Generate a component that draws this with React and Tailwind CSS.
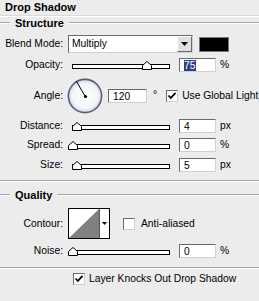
const sunken =
  'border border-t-[#6a6a6a] border-l-[#6a6a6a] border-r-[#d0d0d0] border-b-[#d0d0d0] bg-white';

function Label({ children }) {
  return <div className="w-[63px] shrink-0 text-right">{children}</div>;
}

function GroupHeader({ title }) {
  return (
    <div className="flex h-[12px] items-center">
      <div className="h-[2px] w-[10px] border-t border-b border-t-[#a3a3a3] border-b-white" />
      <div className="px-[5px] text-[11px] font-bold leading-[12px]">{title}</div>
      <div className="h-[2px] flex-1 border-t border-b border-t-[#a3a3a3] border-b-white" />
    </div>
  );
}

function Etched() {
  return <div className="h-[2px] border-t border-b border-t-[#a3a3a3] border-b-white" />;
}

function Slider({ pos }) {
  return (
    <div className="relative ml-[5px] h-[14px] w-[102px] shrink-0">
      <div className="absolute left-[4px] right-0 top-[6px] h-[5px] border border-black bg-white" />
      <svg
        className="absolute top-[3px]"
        style={{ left: pos }}
        width="10"
        height="9"
        viewBox="0 0 10 9"
      >
        <path d="M0.5 8.5 V4.5 L5 0.5 L9.5 4.5 V8.5 Z" fill="#fff" stroke="#000" />
      </svg>
    </div>
  );
}

function Field({ children, selected }) {
  return (
    <div className={`ml-[9px] flex h-[14px] w-[37px] shrink-0 items-center pl-[4px] leading-[11px] ${sunken}`}>
      {selected ? <span className="bg-[#2a3f86] pr-px text-white">{children}</span> : children}
    </div>
  );
}

function Check({ checked }) {
  return (
    <div className={`flex h-[12px] w-[12px] shrink-0 items-center justify-center ${sunken}`}>
      {checked && (
        <svg width="10" height="10" viewBox="0 0 10 10">
          <polyline points="1.5,4.5 3.8,7 8.5,1.8" fill="none" stroke="#000" strokeWidth="1.8" />
        </svg>
      )}
    </div>
  );
}

function SliderRow({ label, pos, value, unit, selected, className }) {
  return (
    <div className={`flex h-[14px] items-center ${className}`}>
      <Label>{label}</Label>
      <Slider pos={pos} />
      <Field selected={selected}>{value}</Field>
      <div className="ml-[4px]">{unit}</div>
    </div>
  );
}

export default function App() {
  return (
    <div className="h-[301px] w-[259px] overflow-hidden bg-[#ececec] text-[10.3px] leading-[12px] text-black font-['Liberation_Sans',Arial,sans-serif]">
      <div className="h-[15px] pl-[5px] text-[11px] font-bold leading-[15px]">Drop Shadow</div>
      <div className="h-[2px] border-t border-b border-t-[#dadada] border-b-white" />

      <GroupHeader title="Structure" />

      <div className="mt-[6px] flex h-[18px] items-center">
        <Label>Blend Mode:</Label>
        <div className={`ml-[5px] flex h-[18px] w-[125px] items-center justify-between pl-[3px] ${sunken}`}>
          <span>Multiply</span>
          <div className="flex h-[16px] w-[15px] items-center justify-center border border-t-white border-l-white border-r-[#6a6a6a] border-b-[#6a6a6a] bg-[#e0e0e0]">
            <svg width="7" height="4" viewBox="0 0 7 4">
              <path d="M0 0 H7 L3.5 4 Z" fill="#000" />
            </svg>
          </div>
        </div>
        <div className="ml-[6px] h-[15px] w-[30px] border border-[#777] bg-black" />
      </div>

      <SliderRow className="mt-[5px]" label="Opacity:" pos={74} value="75" unit="%" selected />

      <div className="mt-[6px] flex h-[36px] items-center">
        <Label>Angle:</Label>
        <svg className="ml-[4px] shrink-0" width="36" height="36" viewBox="0 0 36 36">
          <defs>
            <radialGradient id="dial" cx="50%" cy="50%" r="50%">
              <stop offset="0%" stopColor="#ffffff" />
              <stop offset="75%" stopColor="#f4f6fa" />
              <stop offset="100%" stopColor="#cfd6e4" />
            </radialGradient>
          </defs>
          <circle cx="18" cy="18" r="16.6" fill="url(#dial)" stroke="#56607a" strokeWidth="1.6" />
          <line x1="18" y1="18" x2="9.5" y2="3.4" stroke="#000" strokeWidth="1" />
          <circle cx="18.5" cy="18.5" r="1.6" fill="#000" />
        </svg>
        <div className={`ml-[5px] flex h-[14px] w-[39px] shrink-0 items-center pl-[4px] leading-[11px] ${sunken}`}>
          120
        </div>
        <div className="ml-[6px] self-start pt-[11px]">°</div>
        <div className="ml-[9px]">
          <Check checked />
        </div>
        <div className="ml-[4px] whitespace-nowrap">Use Global Light</div>
      </div>

      <SliderRow className="mt-[5px]" label="Distance:" pos={4} value="4" unit="px" />
      <SliderRow className="mt-[5px]" label="Spread:" pos={0} value="0" unit="%" />
      <SliderRow className="mt-[6px]" label="Size:" pos={4} value="5" unit="px" />

      <div className="mt-[8px]">
        <Etched />
      </div>

      <div className="mt-[7px]">
        <GroupHeader title="Quality" />
      </div>

      <div className="mt-[7px] flex h-[31px] items-center">
        <Label>Contour:</Label>
        <div className="ml-[5px] flex h-[31px] w-[42px] shrink-0 border border-black bg-white">
          <svg width="30" height="29" viewBox="0 0 30 29" className="shrink-0">
            <polygon points="0,29 30,0 30,29" fill="#808080" />
          </svg>
          <div className="flex flex-1 items-center justify-center border-l border-l-[#555]">
            <svg width="5" height="3" viewBox="0 0 5 3">
              <path d="M0 0 H5 L2.5 3 Z" fill="#000" />
            </svg>
          </div>
        </div>
        <div className="ml-[13px]">
          <Check />
        </div>
        <div className="ml-[6px]">Anti-aliased</div>
      </div>

      <SliderRow className="mt-[5px]" label="Noise:" pos={0} value="0" unit="%" />

      <div className="mt-[9px]">
        <Etched />
      </div>

      <div className="mt-[4px] flex h-[12px] items-center">
        <div className="ml-[73px]">
          <Check checked />
        </div>
        <div className="ml-[4px]">Layer Knocks Out Drop Shadow</div>
      </div>
    </div>
  );
}
